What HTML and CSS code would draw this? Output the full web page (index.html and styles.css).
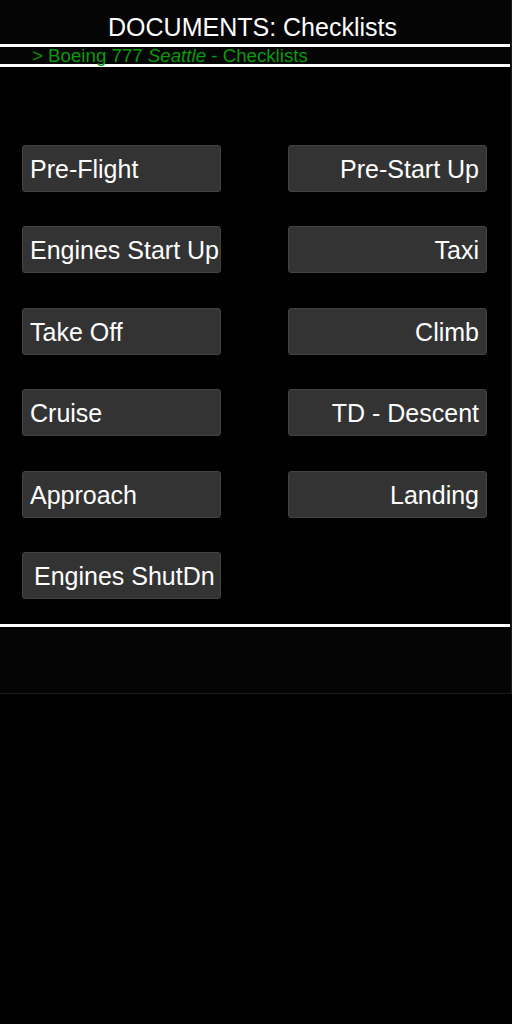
FILE: index.html
```html
<!DOCTYPE html>
<html>
<head>
<meta charset="utf-8">
<link rel="stylesheet" href="styles.css">
</head>
<body>
<div class="panel">
  <header class="head">
    <h1 class="title">DOCUMENTS: Checklists</h1>
  </header>
  <nav class="crumb">&gt; Boeing 777 <em>Seattle</em> - Checklists</nav>
  <main class="grid">
    <button class="btn left">Pre-Flight</button>
    <button class="btn right">Pre-Start Up</button>
    <button class="btn left">Engines Start Up</button>
    <button class="btn right">Taxi</button>
    <button class="btn left">Take Off</button>
    <button class="btn right">Climb</button>
    <button class="btn left">Cruise</button>
    <button class="btn right">TD - Descent</button>
    <button class="btn left">Approach</button>
    <button class="btn right">Landing</button>
    <button class="btn left wide">Engines ShutDn</button>
  </main>
  <footer class="foot"></footer>
</div>
</body>
</html>
```

FILE: styles.css
```css
* { box-sizing: border-box; }
html, body { margin: 0; padding: 0; background: #000; }
body { width: 512px; height: 1024px; font-family: "Liberation Sans", Arial, sans-serif; }

.panel {
  width: 512px;
  height: 694px;
  background: #050505;
  border: 1px solid #1b1b1b;
  border-top: none;
  border-left: none;
  display: flex;
  flex-direction: column;
}

.head {
  height: 44px;
  display: flex;
  justify-content: center;
  padding-right: 6px;
}
.title {
  margin: 0;
  font-weight: normal;
  font-size: 25px;
  line-height: 25px;
  padding-top: 15px;
  color: #fff;
}

.crumb {
  width: 510px;
  height: 23px;
  border-top: 3px solid #fff;
  border-bottom: 3px solid #fff;
  padding-left: 32px;
  font-size: 18.7px;
  line-height: 17px;
  color: #0a9a0a;
  white-space: nowrap;
}
.crumb em { font-style: italic; }

.grid {
  background: #000;
  display: grid;
  grid-template-columns: 199px 199px;
  column-gap: 67px;
  row-gap: 34.4px;
  grid-auto-rows: 47px;
  padding: 78px 0 25px 22px;
  border-bottom: 3px solid #fff;
  width: 510px;
}

.btn {
  margin: 0;
  background: #333;
  border: 1px solid #434343;
  border-radius: 3px;
  color: #fff;
  font-family: "Liberation Sans", Arial, sans-serif;
  font-size: 25px;
  line-height: 1;
  padding: 2px 7px 0;
  white-space: nowrap;
  overflow: hidden;
  display: flex;
  align-items: center;
}
.btn.left { justify-content: flex-start; }
.btn.right { justify-content: flex-end; }
.btn.wide { padding-left: 11px; }

.foot {
  flex: 1;
  background: #050505;
}
```
